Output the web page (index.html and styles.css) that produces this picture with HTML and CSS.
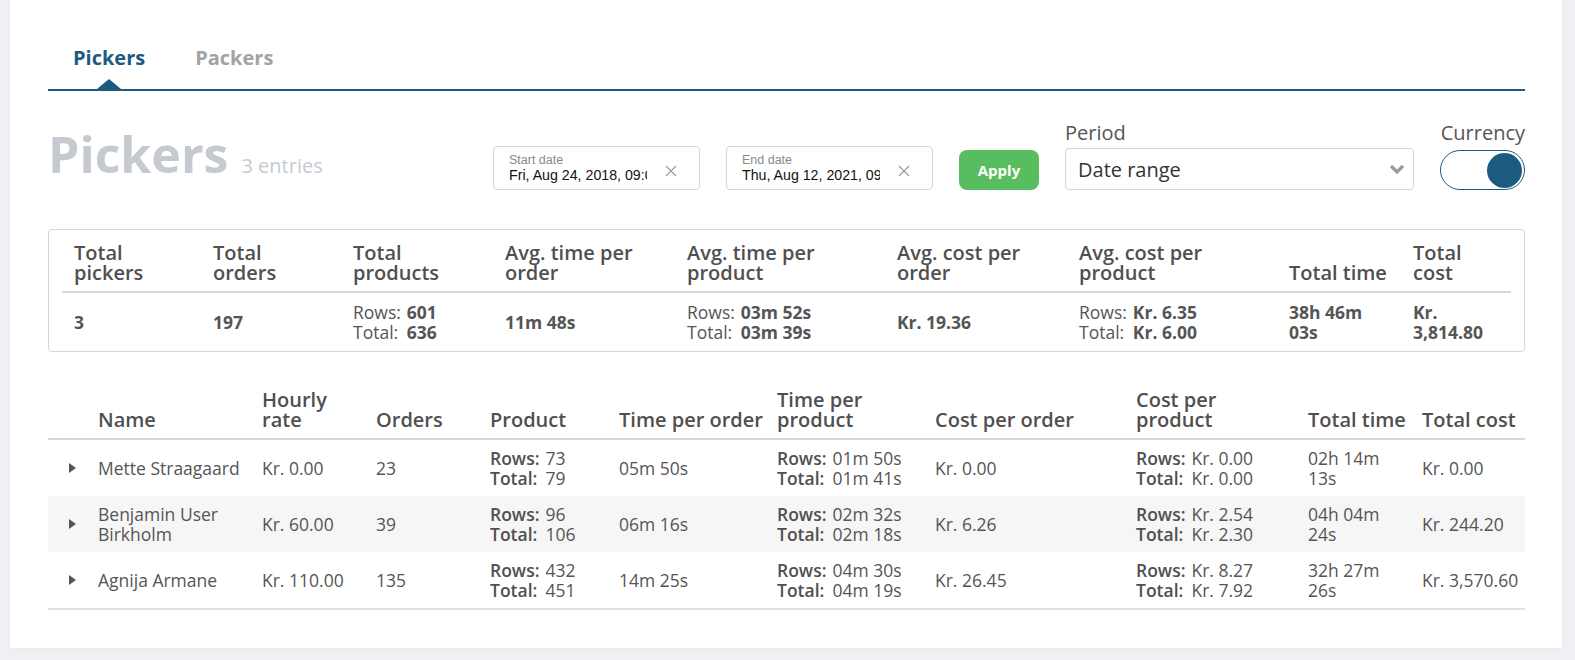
FILE: index.html
```html
<!DOCTYPE html>
<html lang="en">
<head>
<meta charset="utf-8">
<title>Pickers</title>
<link rel="stylesheet" href="styles.css">
</head>
<body>
<div class="card">
  <nav class="tabs">
    <a class="tab active">Pickers</a>
    <a class="tab">Packers</a>
  </nav>

  <div class="toolbar">
    <div class="title">Pickers <span class="count">3 entries</span></div>
    <div class="controls">
      <div class="date-field">
        <div class="date-text">
          <span class="date-label">Start date</span>
          <span class="date-value">Fri, Aug 24, 2018, 09:00</span>
        </div>
        <svg class="clear" width="12" height="12" viewBox="0 0 12 12"><path d="M1 1L11 11M11 1L1 11" stroke="#8c9c94" stroke-width="1.1" fill="none"/></svg>
      </div>
      <div class="date-field">
        <div class="date-text">
          <span class="date-label">End date</span>
          <span class="date-value">Thu, Aug 12, 2021, 09:00</span>
        </div>
        <svg class="clear" width="12" height="12" viewBox="0 0 12 12"><path d="M1 1L11 11M11 1L1 11" stroke="#8c9aa4" stroke-width="1.1" fill="none"/></svg>
      </div>
      <button class="apply">Apply</button>
      <div class="field period">
        <label class="field-label">Period</label>
        <div class="select">
          <span>Date range</span>
          <svg width="16" height="11" viewBox="0 0 16 11"><path d="M2 2L8 8L14 2" stroke="#9a9a9a" stroke-width="3.2" fill="none"/></svg>
        </div>
      </div>
      <div class="field currency">
        <label class="field-label">Currency</label>
        <div class="toggle"><span class="knob"></span></div>
      </div>
    </div>
  </div>

  <div class="summary">
    <table class="sum-table">
      <colgroup>
        <col style="width:139px"><col style="width:140px"><col style="width:152px"><col style="width:182px"><col style="width:210px"><col style="width:182px"><col style="width:210px"><col style="width:124px"><col style="width:110px">
      </colgroup>
      <thead>
        <tr>
          <th>Total<br>pickers</th>
          <th>Total<br>orders</th>
          <th>Total<br>products</th>
          <th>Avg. time per<br>order</th>
          <th>Avg. time per<br>product</th>
          <th>Avg. cost per<br>order</th>
          <th>Avg. cost per<br>product</th>
          <th>Total time</th>
          <th>Total<br>cost</th>
        </tr>
      </thead>
      <tbody>
        <tr>
          <td><b>3</b></td>
          <td><b>197</b></td>
          <td><div class="pair"><span>Rows:</span><b>601</b><span>Total:</span><b>636</b></div></td>
          <td><b>11m 48s</b></td>
          <td><div class="pair"><span>Rows:</span><b>03m 52s</b><span>Total:</span><b>03m 39s</b></div></td>
          <td><b>Kr. 19.36</b></td>
          <td><div class="pair"><span>Rows:</span><b>Kr. 6.35</b><span>Total:</span><b>Kr. 6.00</b></div></td>
          <td><b>38h 46m<br>03s</b></td>
          <td><b>Kr.<br>3,814.80</b></td>
        </tr>
      </tbody>
    </table>
  </div>

  <table class="grid">
    <colgroup>
      <col style="width:42px"><col style="width:164px"><col style="width:114px"><col style="width:114px"><col style="width:129px"><col style="width:158px"><col style="width:158px"><col style="width:201px"><col style="width:172px"><col style="width:114px"><col style="width:111px">
    </colgroup>
    <thead>
      <tr>
        <th></th>
        <th>Name</th>
        <th>Hourly<br>rate</th>
        <th>Orders</th>
        <th>Product</th>
        <th>Time per order</th>
        <th>Time per<br>product</th>
        <th>Cost per order</th>
        <th>Cost per<br>product</th>
        <th>Total time</th>
        <th>Total cost</th>
      </tr>
    </thead>
    <tbody>
      <tr>
        <td class="arrow-cell"><span class="arrow"></span></td>
        <td>Mette Straagaard</td>
        <td>Kr. 0.00</td>
        <td>23</td>
        <td><div class="pair"><b>Rows:</b><span>73</span><b>Total:</b><span>79</span></div></td>
        <td>05m 50s</td>
        <td><div class="pair"><b>Rows:</b><span>01m 50s</span><b>Total:</b><span>01m 41s</span></div></td>
        <td>Kr. 0.00</td>
        <td><div class="pair"><b>Rows:</b><span>Kr. 0.00</span><b>Total:</b><span>Kr. 0.00</span></div></td>
        <td>02h 14m<br>13s</td>
        <td>Kr. 0.00</td>
      </tr>
      <tr class="alt">
        <td class="arrow-cell"><span class="arrow"></span></td>
        <td>Benjamin User<br>Birkholm</td>
        <td>Kr. 60.00</td>
        <td>39</td>
        <td><div class="pair"><b>Rows:</b><span>96</span><b>Total:</b><span>106</span></div></td>
        <td>06m 16s</td>
        <td><div class="pair"><b>Rows:</b><span>02m 32s</span><b>Total:</b><span>02m 18s</span></div></td>
        <td>Kr. 6.26</td>
        <td><div class="pair"><b>Rows:</b><span>Kr. 2.54</span><b>Total:</b><span>Kr. 2.30</span></div></td>
        <td>04h 04m<br>24s</td>
        <td>Kr. 244.20</td>
      </tr>
      <tr>
        <td class="arrow-cell"><span class="arrow"></span></td>
        <td>Agnija Armane</td>
        <td>Kr. 110.00</td>
        <td>135</td>
        <td><div class="pair"><b>Rows:</b><span>432</span><b>Total:</b><span>451</span></div></td>
        <td>14m 25s</td>
        <td><div class="pair"><b>Rows:</b><span>04m 30s</span><b>Total:</b><span>04m 19s</span></div></td>
        <td>Kr. 26.45</td>
        <td><div class="pair"><b>Rows:</b><span>Kr. 8.27</span><b>Total:</b><span>Kr. 7.92</span></div></td>
        <td>32h 27m<br>26s</td>
        <td>Kr. 3,570.60</td>
      </tr>
    </tbody>
  </table>
</div>
</body>
</html>
```

FILE: styles.css
```css
* { box-sizing: border-box; }
html, body { margin: 0; padding: 0; }
body {
  background: #eef0f4;
  font-family: "Open Sans", "Liberation Sans", sans-serif;
  color: #555;
  width: 1575px;
  height: 660px;
  overflow: hidden;
}
.card {
  margin-left: 10px;
  width: 1552px;
  height: 648px;
  background: #fff;
  padding: 0 37px 0 38px;
  box-shadow: 0 0 4px rgba(0,0,0,0.04);
}

/* Tabs */
.tabs {
  display: flex;
  padding-top: 46px;
  border-bottom: 2px solid #1d5a80;
}
.tab {
  position: relative;
  font-size: 20px;
  font-weight: 700;
  line-height: 24px;
  padding: 0 25px 19px;
  color: #a3a3a3;
}
.tab.active { color: #1d5a80; }
.tab.active::after {
  content: "";
  position: absolute;
  left: 50%;
  bottom: 0;
  margin-left: -12px;
  border-left: 12px solid transparent;
  border-right: 12px solid transparent;
  border-bottom: 10px solid #1d5a80;
}

/* Toolbar */
.toolbar {
  display: flex;
  align-items: flex-end;
  margin-top: 30px;
}
.title {
  flex: 1;
  font-size: 50px;
  font-weight: 700;
  line-height: 60px;
  color: #c5cad1;
  margin-bottom: 6px;
  white-space: nowrap;
}
.count {
  font-size: 20px;
  font-weight: 400;
  line-height: 1;
}
.controls {
  display: flex;
  align-items: flex-end;
  gap: 26px;
}
.date-field {
  width: 207px;
  height: 44px;
  border: 1px solid #d6d6d6;
  border-radius: 4px;
  display: flex;
  align-items: center;
  padding: 0 20px 0 15px;
  font-family: "Liberation Sans", Arial, sans-serif;
}
.date-text {
  flex: none;
  width: 138px;
  display: flex;
  flex-direction: column;
  overflow: hidden;
  white-space: nowrap;
  padding-top: 1px;
}
.date-label {
  font-size: 12.5px;
  line-height: 13px;
  color: #8a8a8a;
}
.date-value {
  font-size: 14.2px;
  line-height: 17px;
  color: #111;
  overflow: hidden;
}
.clear { flex: none; margin-left: 18px; margin-top: 5px; }
.apply {
  width: 80px;
  height: 40px;
  border: none;
  border-radius: 8px;
  background: #58bd5e;
  color: #fff;
  font-family: "Open Sans", sans-serif;
  font-size: 15px;
  font-weight: 700;
  padding: 0;
}
.field { display: flex; flex-direction: column; }
.field-label {
  font-size: 20px;
  line-height: 24px;
  color: #555;
  margin-bottom: 3px;
}
.period { width: 349px; }
.select {
  height: 42px;
  border: 1px solid #d6d6d6;
  border-radius: 4px;
  display: flex;
  align-items: center;
  justify-content: space-between;
  padding: 0 8px 0 12px;
  font-size: 20px;
  color: #333;
}
.currency { width: 85px; align-items: flex-end; }
.field.currency .field-label { margin-bottom: 5px; }
.toggle {
  width: 85px;
  height: 40px;
  border: 1px solid #1d5a80;
  border-radius: 20px;
  display: flex;
  align-items: center;
  justify-content: flex-end;
  padding-right: 2px;
}
.knob {
  width: 35px;
  height: 35px;
  border-radius: 50%;
  background: #1d5a80;
}

/* Summary */
.summary {
  margin-top: 39px;
  border: 1px solid #d6d6d6;
  border-radius: 4px;
  padding: 0 13px;
}
.sum-table {
  width: 1449px;
  table-layout: fixed;
  border-collapse: collapse;
}
.sum-table th {
  text-align: left;
  vertical-align: bottom;
  font-size: 20px;
  font-weight: 600;
  line-height: 20px;
  color: #505050;
  padding: 13px 6px 8px 12px;
  border-bottom: 2px solid #d8d8d8;
  white-space: nowrap;
}
.sum-table td {
  font-size: 17.5px;
  line-height: 20px;
  padding: 9px 6px 9px 12px;
  vertical-align: middle;
  white-space: nowrap;
  color: #555;
}
.sum-table b { font-weight: 700; }
.pair {
  display: inline-grid;
  grid-template-columns: auto auto;
  column-gap: 6px;
}

/* Grid */
.grid {
  width: 1477px;
  table-layout: fixed;
  border-collapse: collapse;
  margin-top: 30px;
}
.grid th {
  text-align: left;
  vertical-align: bottom;
  font-size: 20px;
  font-weight: 600;
  line-height: 20px;
  color: #505050;
  padding: 8px 2px 8px 8px;
  border-bottom: 2px solid #d8d8d8;
  white-space: nowrap;
}
.grid td {
  font-size: 17.5px;
  line-height: 20px;
  padding: 8px 2px 8px 8px;
  height: 56px;
  vertical-align: middle;
  color: #555;
}
.grid td b { font-weight: 600; color: #505050; }
.grid tbody tr:last-child td { border-bottom: 2px solid #e2e2e2; }
.grid tr.alt td { background: #f6f6f6; }
.arrow-cell { padding-left: 21px !important; }
.arrow {
  display: block;
  width: 0;
  height: 0;
  border-left: 7px solid #555;
  border-top: 5px solid transparent;
  border-bottom: 5px solid transparent;
}
```
